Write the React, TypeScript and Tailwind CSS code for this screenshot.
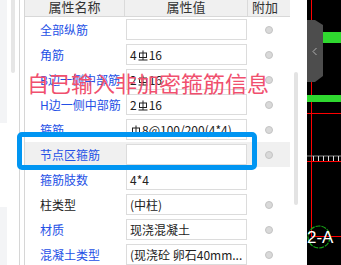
import React from "react";

type Part = string | { sym: true };

type Row = {
    label: string;
    value: Part[];
    dark?: boolean;
    radio?: boolean;
    active?: boolean;
};

const S: Part = { sym: true };

const rows: Row[] = [
    { label: "全部纵筋", value: [], radio: true },
    { label: "角筋", value: ["4", S, "16"], radio: true },
    { label: "B边一侧中部筋", value: ["2", S, "16"], radio: true },
    { label: "H边一侧中部筋", value: ["2", S, "16"], radio: true },
    { label: "箍筋", value: [S, "8@100/200(4*4)"], radio: true },
    { label: "节点区箍筋", value: [], radio: true, active: true },
    { label: "箍筋肢数", value: ["4*4"] },
    { label: "柱类型", value: ["(中柱)"], dark: true, radio: true },
    { label: "材质", value: ["现浇混凝土"], radio: true },
    { label: "混凝土类型", value: ["(现浇砼 卵石40mm..."], radio: true },
];

// grade III rebar mark
function RebarMark() {
    return (
        <svg width="10" height="11" viewBox="0 0 10 11" className="mx-[1px] inline-block align-[-1px]">
            <line x1="5" y1="0.5" x2="5" y2="10" stroke="#222" strokeWidth="1" />
            <rect x="1.5" y="3" width="7" height="4.5" fill="none" stroke="#222" strokeWidth="1" />
            <line x1="0.5" y1="10" x2="9.5" y2="10" stroke="#222" strokeWidth="1" />
        </svg>
    );
}

export default function App() {
    return (
        <div className="relative flex h-[265px] w-[341px] overflow-hidden bg-white font-['Noto_Sans_CJK_SC',sans-serif]">

            {/* left edge */}
            <div className="flex h-full w-[25px] shrink-0">
                <div className="flex w-[7px] flex-col justify-between">
                    <div className="h-[123px] bg-[#f3f4f6]" />
                    <div className="h-[58px] bg-[#f3f4f6]" />
                </div>
                <div className="ml-[4px] w-[4px]">
                    <div className="h-[73px] rounded-b-[2px] bg-[#e6e6e6]" />
                </div>
                <div className="ml-[4px] w-px bg-[#d6d6d6]" />
                <div className="ml-[4px] w-px bg-[#d6d6d6]" />
            </div>

            {/* property table */}
            <div className="flex w-[282px] shrink-0">
                <div className="w-[265px]">
                    <div className="flex h-[17px] border-b border-[#d8d8d8] bg-[#f0f0f0] text-[13px] leading-[14px] text-[#333]">
                        <div className="w-[100px] border-r border-[#dadada] text-center">属性名称</div>
                        <div className="w-[123px] border-r border-[#dadada] text-center">属性值</div>
                        <div className="w-[42px] pr-[8px] text-center">附加</div>
                    </div>
                    {rows.map((row) => (
                        <div key={row.label} className={`flex h-[25px] items-center ${row.active ? "bg-[#f0f0f0]" : ""}`}>
                            <div className={`w-[100px] whitespace-nowrap pl-[15px] text-[12px] ${row.dark ? "text-[#222]" : "text-[#2450e6]"}`}>
                                {row.label}
                            </div>
                            <div className="flex w-[123px] items-center">
                                <div className="ml-[1px] h-[21px] w-[121px] overflow-hidden whitespace-nowrap border border-[#dcdcdc] bg-white px-[3px] text-[12px] leading-[19px] text-[#222]">
                                    {row.value.map((p, i) =>
                                        typeof p === "string" ? <span key={i}>{p}</span> : <RebarMark key={i} />
                                    )}
                                </div>
                            </div>
                            <div className="flex w-[42px] justify-center">
                                {row.radio && <div className="h-[8px] w-[8px] rounded-full border border-[#c4c4c4] bg-[#d9d9d9]" />}
                            </div>
                        </div>
                    ))}
                </div>
                <div className="w-[17px] pl-[4px] pt-[72px]">
                    <div className="h-[133px] w-[4px] rounded-full bg-[#e3e3e3]" />
                </div>
            </div>

            {/* drawing canvas */}
            <div className="w-[34px] shrink-0 bg-black">
                <svg width="34" height="265" viewBox="0 0 34 265">
                    <line x1="4.5" y1="0" x2="4.5" y2="237" stroke="#ff0000" strokeWidth="1" />
                    <rect x="0" y="32" width="34" height="11" fill="#2fd82f" />
                    <polygon points="0,20 8,20 16,25 16,76 8,82 0,82" fill="#4d4d4d" />
                    <polyline points="9.5,48 6,51.5 9.5,55" fill="none" stroke="#b0b0b0" strokeWidth="1" />
                    <rect x="0" y="95" width="34" height="7" fill="#2fd82f" />
                    <line x1="0" y1="113.5" x2="34" y2="113.5" stroke="#ff0000" strokeWidth="1" />
                    <line x1="0" y1="156" x2="34" y2="156" stroke="#888" strokeWidth="1" />
                    {[6, 11, 16, 21, 26, 31].map((x) => (
                        <line key={x} x1={x + 0.5} y1="156" x2={x + 0.5} y2="161" stroke="#ddd" strokeWidth="1" />
                    ))}
                    <line x1="0" y1="161.5" x2="34" y2="161.5" stroke="#ff0000" strokeWidth="1" />
                    <line x1="4.5" y1="236.5" x2="34" y2="236.5" stroke="#ff0000" strokeWidth="1" />
                    <circle cx="12" cy="237" r="11" fill="none" stroke="#17a317" strokeWidth="1.2" strokeDasharray="5 1" />
                    <text x="0" y="243" fill="#fff" fontSize="17" fontFamily="Liberation Sans, sans-serif">2-A</text>
                </svg>
            </div>

            {/* annotations */}
            <div className="absolute left-[27px] top-[71px] whitespace-nowrap text-[22px] leading-[22px] text-[#f0506e]">
                自已输入非加密箍筋信息
            </div>
            <div className="absolute left-[17px] top-[132px] h-[38px] w-[240px] rounded-[5px] border-[5px] border-[#0095f2]" />
        </div>
    );
}
